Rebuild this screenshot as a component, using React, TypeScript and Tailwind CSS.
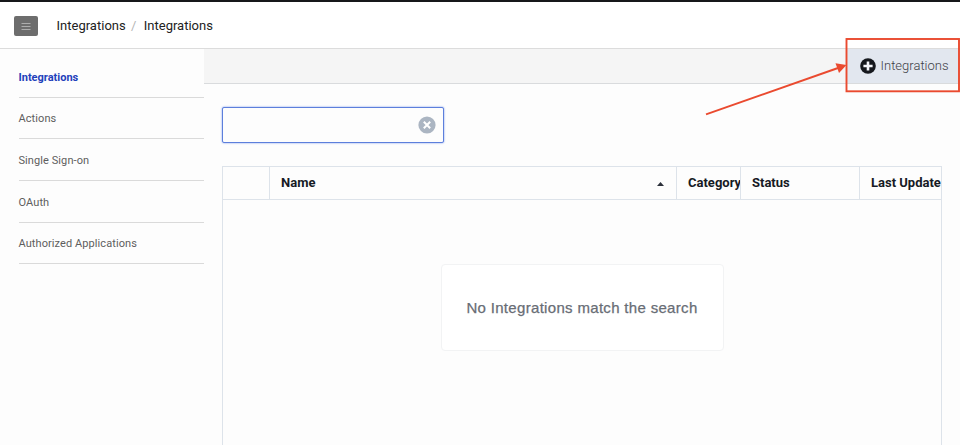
const navItems = ["Integrations", "Actions", "Single Sign-on", "OAuth", "Authorized Applications"];

function Header() {
  return (
    <header className="flex h-[49px] shrink-0 items-center border-t-2 border-b border-t-[#17181a] border-b-[#dcdcdc] bg-white pl-[14px] pt-[2px]">
      <button className="flex h-5 w-6 items-center justify-center rounded-[2px] bg-[#6d6d6d]" aria-label="Menu">
        <svg width="10" height="9" viewBox="0 0 10 9" stroke="#adadad" strokeWidth="1">
          <path d="M.5 1.5h9M.5 4.5h9M.5 7.5h9" />
        </svg>
      </button>
      <nav className="ml-[18.5px] flex text-[13px] leading-5 tracking-[0.01px] text-[#222]">
        <span>Integrations</span>
        <span className="ml-[4px] mr-[6px] w-[8px] text-center text-[#b5b5b5]">/</span>
        <span>Integrations</span>
      </nav>
    </header>
  );
}

function Sidebar() {
  return (
    <aside className="w-[204px] shrink-0 pl-[18.5px] pt-[7px] text-[11px] tracking-[0.08px] text-[#5e5e5e]">
      {navItems.map((item, i) => (
        <div
          key={item}
          className={
            i === 0
              ? "flex h-[41.7px] items-center border-b border-[#dadada] pt-[3px] font-bold tracking-[0px] text-[#1f41bb]"
              : "flex h-[41.7px] items-center border-b border-[#dadada] pt-[3px]"
          }
        >
          {item}
        </div>
      ))}
    </aside>
  );
}

function Toolbar() {
  return (
    <div className="flex h-[35px] shrink-0 justify-end border-b border-[#d9dbdd] bg-[#f5f5f5]">
      <button className="flex w-[113px] items-center bg-[#e2e7ef] pl-[13px] text-[13px] font-light text-[#3d4046]">
        <svg width="16" height="16" viewBox="0 0 16 16" className="mr-[4.5px]">
          <circle cx="8" cy="8" r="7.8" fill="#15181d" />
          <path d="M8 3.4v9.2M3.4 8h9.2" stroke="#f4f6fa" strokeWidth="2.6" />
        </svg>
        <span className="tracking-[0.01px]">Integrations</span>
      </button>
    </div>
  );
}

function SearchBox() {
  return (
    <div className="flex h-[36px] w-[222px] items-center justify-end rounded-[2px] border border-[#5d7fdc] bg-[#fdfdfd] pr-[7px] shadow-[0_0_2px_#6f91ec]">
      <svg width="18" height="18" viewBox="0 0 18 18" className="-mt-px">
        <circle cx="9" cy="9" r="8.6" fill="#abb5c2" />
        <path d="M5.8 5.8l6.4 6.4M12.2 5.8l-6.4 6.4" stroke="white" strokeWidth="2" />
      </svg>
    </div>
  );
}

function ResultsTable() {
  return (
    <section className="mt-[23px] flex w-[720px] flex-1 flex-col border border-b-0 border-[#dde3ea]">
      <div className="flex h-[33px] border-b border-[#dde3ea] text-[13px] font-bold leading-[32px] tracking-[0px] text-[#161a24]">
        <div className="w-[47px] shrink-0 border-r border-[#dde3ea]" />
        <div className="flex w-[407px] shrink-0 items-center justify-between border-r border-[#dde3ea] pl-[11px] pr-[12px]">
          Name
          <svg width="7" height="4" viewBox="0 0 7 4" className="mt-[2px]">
            <path d="M0 4L3.5 0L7 4z" fill="#2b303a" />
          </svg>
        </div>
        <div className="w-[64px] shrink-0 overflow-hidden whitespace-nowrap border-r border-[#dde3ea] pl-[11px]">Category</div>
        <div className="w-[119px] shrink-0 border-r border-[#dde3ea] pl-[11px]">Status</div>
        <div className="min-w-0 flex-1 overflow-hidden whitespace-nowrap pl-[11px]">Last Update</div>
      </div>
      <div className="flex justify-center pt-[64px]">
        <div className="flex h-[87px] w-[283px] items-center justify-center rounded-[4px] border border-[#f2f3f4] bg-white pt-[2px] font-['Liberation_Sans',Arial,sans-serif] text-[15px] tracking-[0.32px] text-[#686d75] [-webkit-text-stroke:0.25px_#686d75]">
          No Integrations match the search
        </div>
      </div>
    </section>
  );
}

function Callout() {
  return (
    <svg className="pointer-events-none absolute inset-0" width="960" height="445" viewBox="0 0 960 445">
      <rect x="846.5" y="39" width="112.5" height="52.3" fill="none" stroke="#ea4a2f" strokeWidth="1.9" />
      <path d="M706 114.3L838 68" stroke="#ea4a2f" strokeWidth="1.9" />
      <path d="M846.5 65L835.5 63.3L839 73z" fill="#ea4a2f" />
    </svg>
  );
}

export default function App() {
  return (
    <div className="relative flex h-[445px] w-[960px] flex-col overflow-hidden bg-[#fdfdfd] font-[Roboto,sans-serif]">
      <Header />
      <div className="flex min-h-0 flex-1">
        <Sidebar />
        <main className="flex min-w-0 flex-1 flex-col">
          <Toolbar />
          <div className="flex flex-1 flex-col pl-[18px] pt-[23px]">
            <SearchBox />
            <ResultsTable />
          </div>
        </main>
      </div>
      <Callout />
    </div>
  );
}
